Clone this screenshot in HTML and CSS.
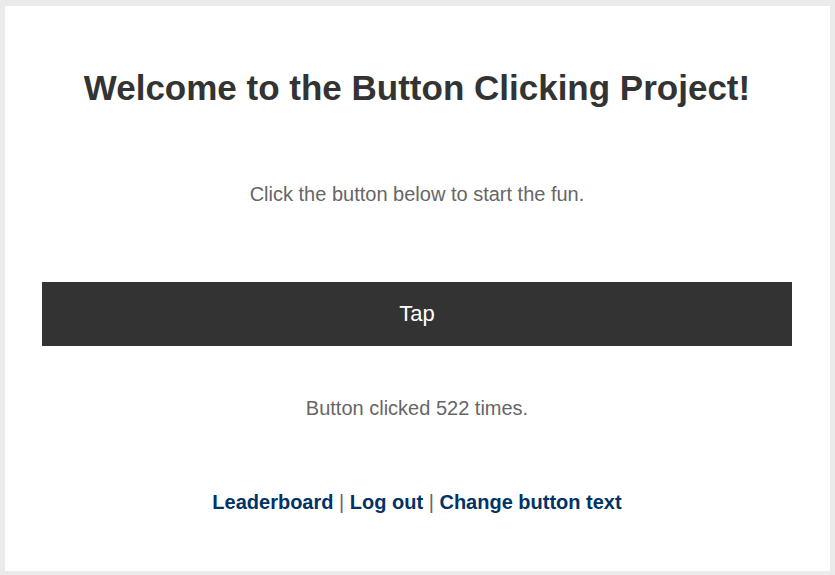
FILE: index.html
```html
<!DOCTYPE html>
<html>
<head>
<meta charset="utf-8">
<link rel="stylesheet" href="styles.css">
</head>
<body>
<div class="card">
  <h1 class="title">Welcome to the Button Clicking Project!</h1>
  <p class="intro">Click the button below to start the fun.</p>
  <button class="tap">Tap</button>
  <p class="count">Button clicked 522 times.</p>
  <p class="links"><a href="#">Leaderboard</a> | <a href="#">Log out</a> | <a href="#">Change button text</a></p>
</div>
</body>
</html>
```

FILE: styles.css
```css
html, body {
  margin: 0;
  padding: 0;
  background: #ebebeb;
  font-family: "Liberation Sans", Arial, sans-serif;
}
body {
  padding: 6px 5px 4px 5px;
  height: 575px;
  box-sizing: border-box;
}
.card {
  background: #fff;
  height: 565px;
  box-sizing: border-box;
  padding: 0 38px 0 37px;
  display: flex;
  flex-direction: column;
  align-items: stretch;
  text-align: center;
}
.title {
  margin: 62px 0 0 0;
  font-size: 35px;
  line-height: 40px;
  font-weight: bold;
  color: #333;
}
.intro {
  margin: 75px 0 0 0;
  font-size: 20px;
  line-height: 23px;
  color: #666;
}
.tap {
  margin-top: 76px;
  height: 64px;
  border: none;
  background: #333;
  color: #fff;
  font-family: "Liberation Sans", Arial, sans-serif;
  font-size: 22px;
}
.count {
  margin: 51px 0 0 0;
  font-size: 20px;
  line-height: 23px;
  color: #666;
}
.links {
  margin: 71px 0 0 0;
  font-size: 20px;
  line-height: 23px;
  color: #666;
}
.links a {
  color: #003366;
  font-weight: bold;
  text-decoration: none;
}
```
